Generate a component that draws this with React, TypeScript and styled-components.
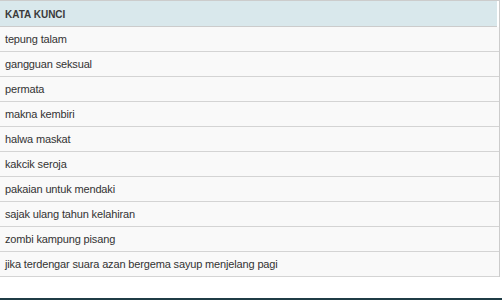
import React, { ReactElement } from 'react';
import styled, { createGlobalStyle } from 'styled-components';

const keywords = [
  'tepung talam',
  'gangguan seksual',
  'permata',
  'makna kembiri',
  'halwa maskat',
  'kakcik seroja',
  'pakaian untuk mendaki',
  'sajak ulang tahun kelahiran',
  'zombi kampung pisang',
  'jika terdengar suara azan bergema sayup menjelang pagi',
];

export default function App(): ReactElement {
  return (
    <>
      <GlobalStyle />
      <Page>
        <KeywordTable>
          <HeaderRow>KATA KUNCI</HeaderRow>
          {keywords.map((word) => (
            <Row key={word}>{word}</Row>
          ))}
        </KeywordTable>
        <Spacer />
        <BottomBar />
      </Page>
    </>
  );
}

const GlobalStyle = createGlobalStyle`
  html, body {
    margin: 0;
    padding: 0;
    background: #ffffff;
  }
`;

const Page = styled.div`
  width: 502px;
  height: 300px;
  display: flex;
  flex-direction: column;
  font-family: Tahoma, 'Liberation Sans', Arial, sans-serif;
  font-size: 11px;
  color: #333333;
`;

const KeywordTable = styled.div`
  width: 499px;
  border-top: 1px solid #cccccc;
  border-right: 1px solid #cccccc;
  display: flex;
  flex-direction: column;
`;

const HeaderRow = styled.div`
  height: 25px;
  line-height: 27px;
  padding-left: 5px;
  margin-right: 2px;
  background: #d9e8ec;
  font-size: 10px;
  font-weight: bold;
  color: #3a3a3a;
  border-bottom: 1px solid #cccccc;
`;

const Row = styled.div`
  height: 24px;
  line-height: 25px;
  padding-left: 5px;
  background: #f9f9f9;
  letter-spacing: -0.15px;
  border-bottom: 1px solid #d4d4d4;
`;

const Spacer = styled.div`
  flex: 1;
`;

const BottomBar = styled.div`
  height: 2px;
  background: #1f3c46;
`;
